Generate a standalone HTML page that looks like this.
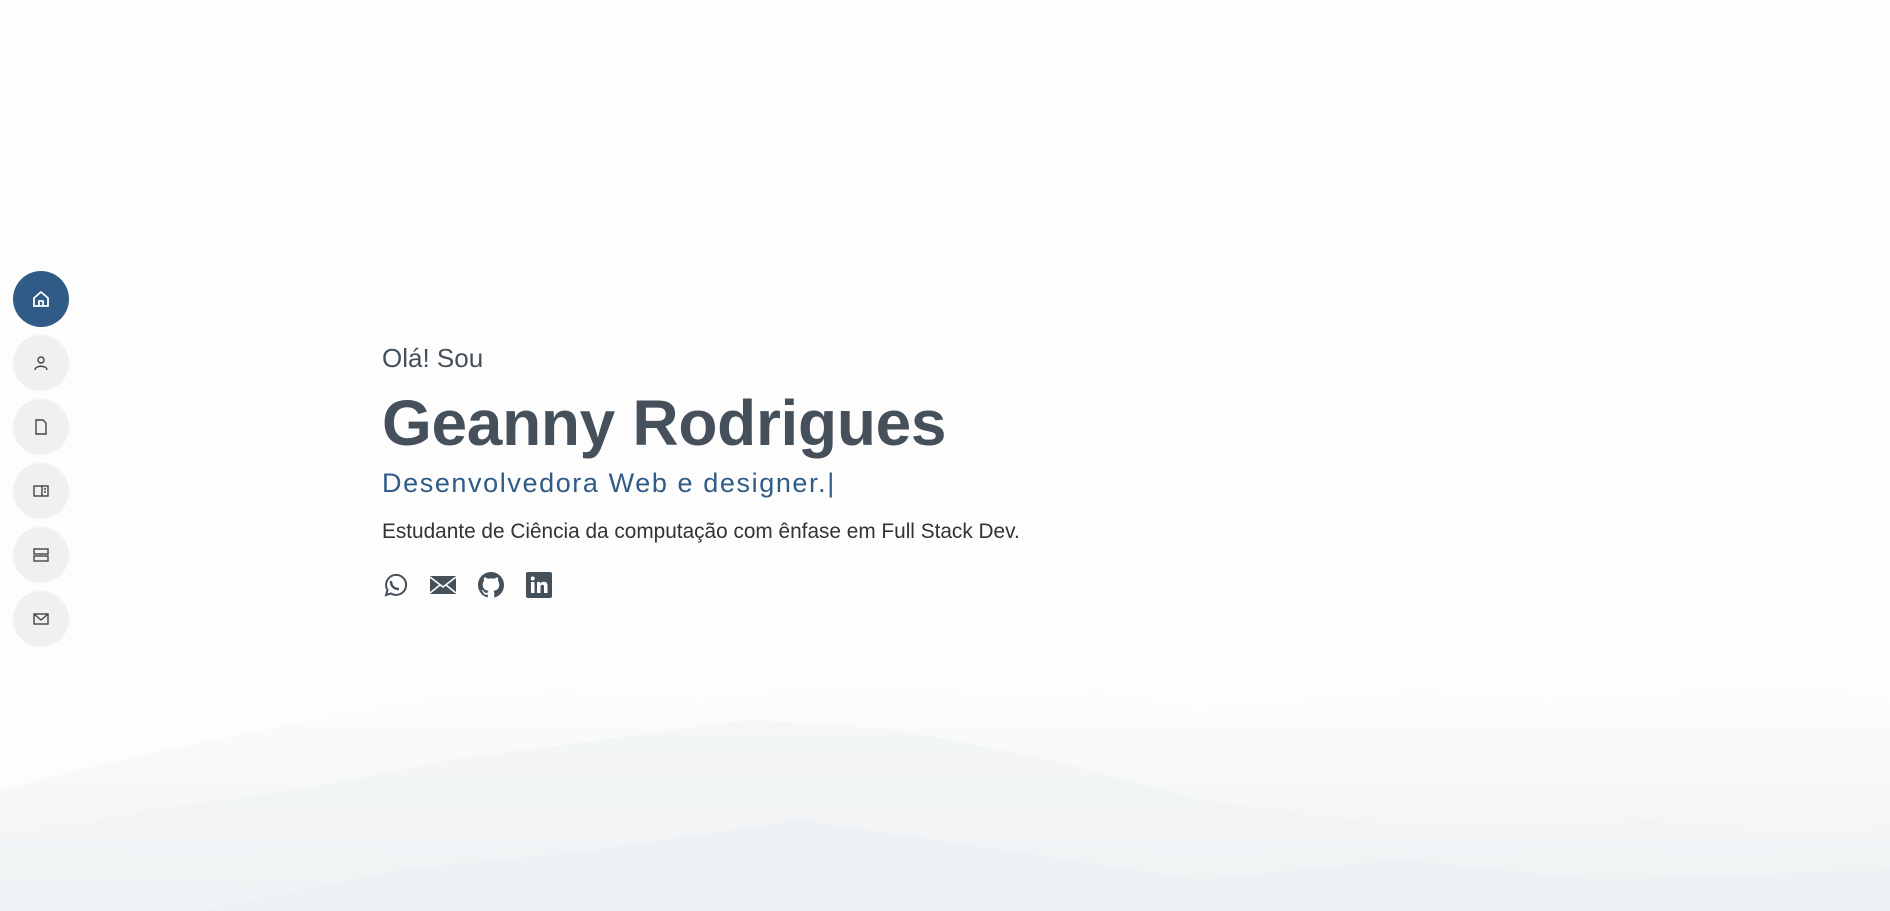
<!DOCTYPE html>
<html><head><meta charset="utf-8"><style>
*{margin:0;padding:0;box-sizing:border-box}
body{width:1890px;height:911px;overflow:hidden;background:#fdfdfd;font-family:"Liberation Sans",sans-serif;position:relative}
.bg{position:absolute;left:0;top:0}
.nav{position:absolute;left:13px;top:271px}
.nav div{width:56px;height:56px;border-radius:50%;background:#eef0f2;margin-bottom:8px;display:flex;align-items:center;justify-content:center}
.nav div.a{background:#2f5b86}
.t{position:absolute;left:382px;color:#45505b;white-space:nowrap}
</style></head><body>
<svg class="bg" width="1890" height="911">
<defs><linearGradient id="g" x1="0" y1="0" x2="0" y2="1"><stop offset="0" stop-color="#fdfdfd"/><stop offset="1" stop-color="#eef1f4"/></linearGradient></defs>
<path d="M0 790 L120 760 L260 730 L420 700 L560 690 L700 700 L820 685 L900 680 L1000 700 L1100 690 L1200 710 L1300 700 L1420 690 L1550 700 L1700 690 L1800 680 L1890 700 L1890 911 L0 911Z" fill="url(#g)"/>
<path d="M0 840 L150 810 L300 790 L450 760 L600 740 L750 720 L900 730 L1050 760 L1200 800 L1350 820 L1500 830 L1650 820 L1800 840 L1890 830 L1890 911 L0 911Z" fill="#f1f3f5" opacity="0.7"/>
<path d="M200 911 L400 870 L600 850 L800 820 L1000 850 L1200 880 L1400 860 L1600 880 L1890 870 L1890 911Z" fill="#eceff2" opacity="0.7"/>
</svg>
<div class="nav">
<div class="a"><svg width="20" height="20" viewBox="0 0 20 20" fill="none" stroke="#fff" stroke-width="1.8"><path d="M3 9 L10 3 L17 9 V17 H3Z M8 17 V12 H12 V17"/></svg></div>
<div><svg width="18" height="18" viewBox="0 0 18 18" fill="none" stroke="#444" stroke-width="1.4"><circle cx="9" cy="6" r="3"/><path d="M3 16 C3 11 15 11 15 16"/></svg></div>
<div><svg width="18" height="18" viewBox="0 0 18 18" fill="none" stroke="#444" stroke-width="1.4"><path d="M4 2 H11 L14 5 V16 H4Z"/></svg></div>
<div><svg width="18" height="18" viewBox="0 0 18 18" fill="none" stroke="#444" stroke-width="1.4"><rect x="2" y="4" width="14" height="10"/><path d="M10 4 V14 M12 7 H14 M12 10 H14"/></svg></div>
<div><svg width="18" height="18" viewBox="0 0 18 18" fill="none" stroke="#444" stroke-width="1.4"><rect x="2" y="3" width="14" height="5"/><rect x="2" y="10" width="14" height="5"/></svg></div>
<div><svg width="18" height="18" viewBox="0 0 18 18" fill="none" stroke="#444" stroke-width="1.4"><rect x="2" y="4" width="14" height="10"/><path d="M2 4 L9 10 L16 4"/></svg></div>
</div>
<div class="t" style="top:343px;font-size:26px">Olá! Sou</div>
<div class="t" style="top:386px;font-size:64px;font-weight:bold;letter-spacing:-0.3px">Geanny Rodrigues</div>
<div class="t" style="top:468px;font-size:27px;color:#2f5b86;letter-spacing:1.6px">Desenvolvedora Web e designer.|</div>
<div class="t" style="top:520px;font-size:20.8px;color:#333">Estudante de Ciência da computação com ênfase em Full Stack Dev.</div>
<div class="t" style="top:572px;display:flex;gap:22px;align-items:center">
<svg width="26" height="26" viewBox="0 0 26 26" fill="none" stroke="#45505b" stroke-width="2"><path d="M4 23 L5.5 18 A10 10 0 1 1 9 21.5Z"/><path d="M9 9 C9 14 12 17 17 17" stroke-width="2.5"/></svg>
<svg width="26" height="22" viewBox="0 0 26 22"><rect x="0" y="2" width="26" height="18" fill="#45505b"/><path d="M0 3 L13 13 L26 3 M0 19 L10 11 M26 19 L16 11" stroke="#fff" stroke-width="1.6" fill="none"/></svg>
<svg width="26" height="26" viewBox="0 0 16 16"><path fill="#45505b" d="M8 0C3.58 0 0 3.58 0 8c0 3.540 2.29 6.53 5.47 7.59.4.07.55-.17.55-.38v-1.33c-2.23.48-2.7-1.070-2.7-1.07-.36-.92-.89-1.17-.89-1.17-.73-.5.06-.49.06-.49.8.06 1.23.83 1.23.83.71 1.22 1.87.87 2.33.66.07-.52.28-.87.51-1.07-1.78-.2-3.65-.89-3.65-3.950 0-.87.31-1.59.82-2.15-.08-.2-.36-1.02.08-2.12 0 0 .67-.21 2.2.82a7.6 7.6 0 014 0c1.53-1.04 2.2-.82 2.2-.82.44 1.1.16 1.92.08 2.12.51.56.82 1.27.82 2.15 0 3.07-1.87 3.75-3.65 3.95.29.25.54.73.54 1.48v2.2c0 .21.15.46.55.38A8.01 8.01 0 0016 8c0-4.420-3.58-8-8-8z"/></svg>
<svg width="26" height="26" viewBox="0 0 26 26"><rect width="26" height="26" rx="2" fill="#45505b"/><rect x="5" y="10" width="3.5" height="11" fill="#fff"/><circle cx="6.7" cy="6.5" r="2" fill="#fff"/><path d="M11 10 H14.3 V11.8 C15 10.5 16.5 9.8 18 9.8 C20.5 9.8 21.5 11.5 21.5 14 V21 H18 V14.8 C18 13.5 17.5 12.8 16.3 12.8 C15 12.8 14.5 13.8 14.5 15 V21 H11Z" fill="#fff"/></svg>
</div>
</body></html>
